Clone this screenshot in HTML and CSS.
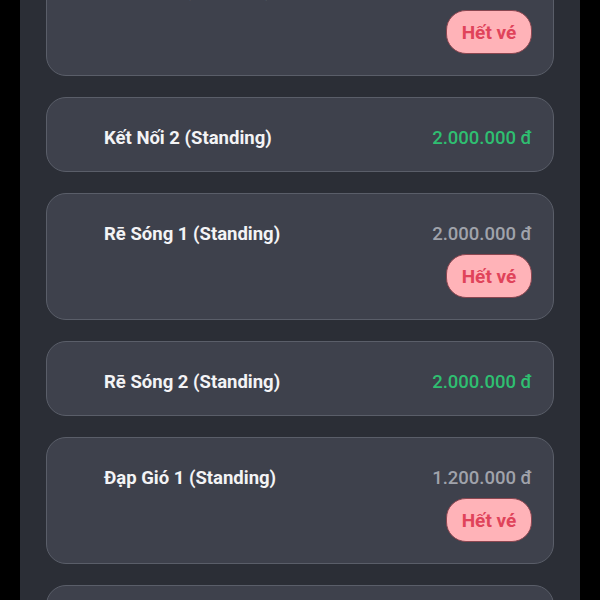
FILE: index.html
```html
<!DOCTYPE html>
<html lang="vi">
<head>
    <meta charset="UTF-8">
    <meta name="viewport" content="width=device-width, initial-scale=1.0">
    <title>Chọn vé</title>
    <link rel="stylesheet" href="styles.css">
</head>
<body>
    <div class="panel">
        <div class="ticket-list">
            <div class="ticket">
                <div class="ticket-row">
                    <span class="ticket-name">Kết Nối 1 (Standing)</span>
                    <span class="ticket-price">2.000.000 đ</span>
                </div>
                <button class="sold-out">Hết vé</button>
            </div>
            <div class="ticket">
                <div class="ticket-row">
                    <span class="ticket-name">Kết Nối 2 (Standing)</span>
                    <span class="ticket-price available">2.000.000 đ</span>
                </div>
            </div>
            <div class="ticket">
                <div class="ticket-row">
                    <span class="ticket-name">Rē Sóng 1 (Standing)</span>
                    <span class="ticket-price">2.000.000 đ</span>
                </div>
                <button class="sold-out">Hết vé</button>
            </div>
            <div class="ticket">
                <div class="ticket-row">
                    <span class="ticket-name">Rē Sóng 2 (Standing)</span>
                    <span class="ticket-price available">2.000.000 đ</span>
                </div>
            </div>
            <div class="ticket">
                <div class="ticket-row">
                    <span class="ticket-name">Đạp Gió 1 (Standing)</span>
                    <span class="ticket-price">1.200.000 đ</span>
                </div>
                <button class="sold-out">Hết vé</button>
            </div>
            <div class="ticket">
                <div class="ticket-row">
                    <span class="ticket-name">Đạp Gió 2 (Standing)</span>
                    <span class="ticket-price available">1.200.000 đ</span>
                </div>
            </div>
        </div>
    </div>
</body>
</html>
```

FILE: styles.css
```css
body {
    margin: 0;
    background: #000;
    font-family: Roboto, "Noto Sans", sans-serif;
}
.panel {
    width: 508px;
    margin: 0 auto;
    padding: 0 26px;
    min-height: 100vh;
    background: #2b2e36;
    overflow: hidden;
}
/* list is scrolled a bit, first card cut at top */
.ticket-list {
    display: flex;
    flex-direction: column;
    gap: 21px;
    margin-top: -51px;
}
.ticket {
    display: flex;
    flex-direction: column;
    padding: 21px;
    background: #3e414c;
    border: 1px solid #5a5e69;
    border-radius: 20px;
}
.ticket-row {
    display: flex;
    justify-content: space-between;
    align-items: center;
    min-height: 25px;
    padding-top: 6px;
}
.ticket-name {
    padding-left: 36px;
    color: #f3f3f5;
    font-size: 18.5px;
    font-weight: 700;
}
.ticket-price {
    color: #a0a3ab;
    font-size: 18.5px;
    font-weight: 500;
}
.ticket-price.available {
    color: #2fbf71;
}
.sold-out {
    align-self: flex-end;
    margin-top: 8px;
    width: 86px;
    height: 44px;
    border: 1px solid #8a4650;
    border-radius: 20px;
    background: #ffb3b8;
    color: #e0435a;
    font-family: inherit;
    font-size: 19px;
    font-weight: 700;
}
```
